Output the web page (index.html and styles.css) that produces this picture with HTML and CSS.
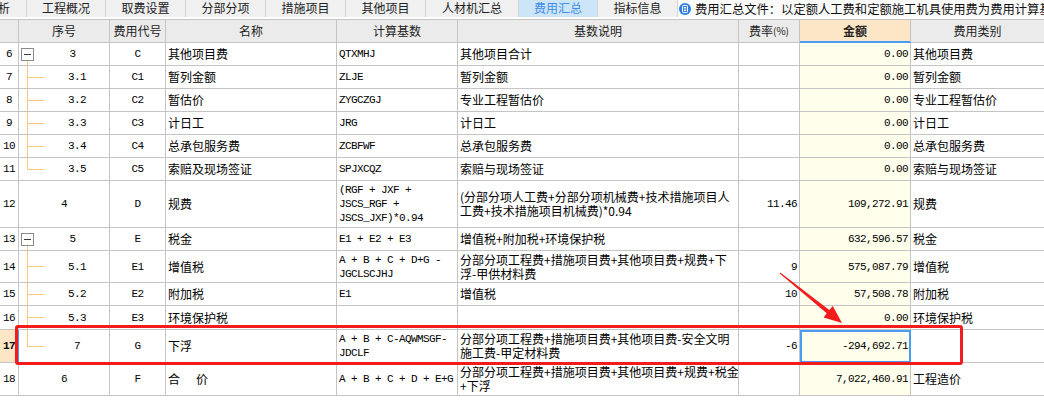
FILE: index.html
```html
<!DOCTYPE html>
<html lang="zh-CN">
<head>
<meta charset="utf-8">
<title>费用汇总</title>
<link rel="stylesheet" href="styles.css">
</head>
<body>
<div class="page">
  <div class="tabs">
    <div class="tab first">造价分析</div>
    <div class="tab w79">工程概况</div>
    <div class="tab">取费设置</div>
    <div class="tab">分部分项</div>
    <div class="tab">措施项目</div>
    <div class="tab">其他项目</div>
    <div class="tab w93">人材机汇总</div>
    <div class="tab active">费用汇总</div>
    <div class="tab">指标信息</div>
    <div class="info">
      <svg class="info-icon" width="12" height="12" viewBox="0 0 12 12">
        <circle cx="6" cy="6" r="6" fill="#2f7fe3"/>
        <rect x="3.5" y="2.5" width="5" height="7" rx="0.8" fill="none" stroke="#fff" stroke-width="1"/>
        <line x1="4.8" y1="4.5" x2="7.2" y2="4.5" stroke="#fff" stroke-width="0.9"/>
        <line x1="4.8" y1="6" x2="7.2" y2="6" stroke="#fff" stroke-width="0.9"/>
        <line x1="4.8" y1="7.5" x2="7.2" y2="7.5" stroke="#fff" stroke-width="0.9"/>
      </svg>
      <span>费用汇总文件：以定额人工费和定额施工机具使用费为费用计算基数</span>
    </div>
  </div>

  <div class="grid">
    <div class="row head">
      <div class="c c0"></div>
      <div class="c c1">序号</div>
      <div class="c c2">费用代号</div>
      <div class="c c3">名称</div>
      <div class="c c4">计算基数</div>
      <div class="c c5">基数说明</div>
      <div class="c c6">费率<span class="pct">(%)</span></div>
      <div class="c c7">金额</div>
      <div class="c c8">费用类别</div>
    </div>

    <div class="row r">
      <div class="c c0">6</div>
      <div class="c c1 t1"><span class="box"></span><span class="txt">3</span></div>
      <div class="c c2">C</div>
      <div class="c c3">其他项目费</div>
      <div class="c c4">QTXMHJ</div>
      <div class="c c5">其他项目合计</div>
      <div class="c c6"></div>
      <div class="c c7">0.00</div>
      <div class="c c8">其他项目费</div>
    </div>
    <div class="row r">
      <div class="c c0">7</div>
      <div class="c c1 t2">3.1</div>
      <div class="c c2">C1</div>
      <div class="c c3">暂列金额</div>
      <div class="c c4">ZLJE</div>
      <div class="c c5">暂列金额</div>
      <div class="c c6"></div>
      <div class="c c7">0.00</div>
      <div class="c c8">暂列金额</div>
    </div>
    <div class="row r">
      <div class="c c0">8</div>
      <div class="c c1 t2">3.2</div>
      <div class="c c2">C2</div>
      <div class="c c3">暂估价</div>
      <div class="c c4">ZYGCZGJ</div>
      <div class="c c5">专业工程暂估价</div>
      <div class="c c6"></div>
      <div class="c c7">0.00</div>
      <div class="c c8">专业工程暂估价</div>
    </div>
    <div class="row r">
      <div class="c c0">9</div>
      <div class="c c1 t2">3.3</div>
      <div class="c c2">C3</div>
      <div class="c c3">计日工</div>
      <div class="c c4">JRG</div>
      <div class="c c5">计日工</div>
      <div class="c c6"></div>
      <div class="c c7">0.00</div>
      <div class="c c8">计日工</div>
    </div>
    <div class="row r">
      <div class="c c0">10</div>
      <div class="c c1 t2">3.4</div>
      <div class="c c2">C4</div>
      <div class="c c3">总承包服务费</div>
      <div class="c c4">ZCBFWF</div>
      <div class="c c5">总承包服务费</div>
      <div class="c c6"></div>
      <div class="c c7">0.00</div>
      <div class="c c8">总承包服务费</div>
    </div>
    <div class="row r">
      <div class="c c0">11</div>
      <div class="c c1 t2 last">3.5</div>
      <div class="c c2">C5</div>
      <div class="c c3">索赔及现场签证</div>
      <div class="c c4">SPJXCQZ</div>
      <div class="c c5">索赔与现场签证</div>
      <div class="c c6"></div>
      <div class="c c7">0.00</div>
      <div class="c c8">索赔与现场签证</div>
    </div>
    <div class="row r h47">
      <div class="c c0">12</div>
      <div class="c c1">4</div>
      <div class="c c2">D</div>
      <div class="c c3">规费</div>
      <div class="c c4"><span>(RGF + JXF +<br>JSCS_RGF +<br>JSCS_JXF)*0.94</span></div>
      <div class="c c5"><span>(分部分项人工费+分部分项机械费+技术措施项目人<br>工费+技术措施项目机械费)*0.94</span></div>
      <div class="c c6">11.46</div>
      <div class="c c7">109,272.91</div>
      <div class="c c8">规费</div>
    </div>
    <div class="row r">
      <div class="c c0">13</div>
      <div class="c c1 t1"><span class="box"></span><span class="txt">5</span></div>
      <div class="c c2">E</div>
      <div class="c c3">税金</div>
      <div class="c c4">E1 + E2 + E3</div>
      <div class="c c5">增值税+附加税+环境保护税</div>
      <div class="c c6"></div>
      <div class="c c7">632,596.57</div>
      <div class="c c8">税金</div>
    </div>
    <div class="row r h32">
      <div class="c c0">14</div>
      <div class="c c1 t2">5.1</div>
      <div class="c c2">E1</div>
      <div class="c c3">增值税</div>
      <div class="c c4"><span>A + B + C + D+G -<br>JGCLSCJHJ</span></div>
      <div class="c c5"><span>分部分项工程费+措施项目费+其他项目费+规费+下<br>浮-甲供材料费</span></div>
      <div class="c c6">9</div>
      <div class="c c7">575,087.79</div>
      <div class="c c8">增值税</div>
    </div>
    <div class="row r">
      <div class="c c0">15</div>
      <div class="c c1 t2">5.2</div>
      <div class="c c2">E2</div>
      <div class="c c3">附加税</div>
      <div class="c c4">E1</div>
      <div class="c c5">增值税</div>
      <div class="c c6">10</div>
      <div class="c c7">57,508.78</div>
      <div class="c c8">附加税</div>
    </div>
    <div class="row r h24">
      <div class="c c0">16</div>
      <div class="c c1 t2">5.3</div>
      <div class="c c2">E3</div>
      <div class="c c3">环境保护税</div>
      <div class="c c4"></div>
      <div class="c c5"></div>
      <div class="c c6"></div>
      <div class="c c7">0.00</div>
      <div class="c c8">环境保护税</div>
    </div>
    <div class="row r h33 sel">
      <div class="c c0">17</div>
      <div class="c c1 t2 last">7</div>
      <div class="c c2">G</div>
      <div class="c c3">下浮</div>
      <div class="c c4"><span>A + B + C-AQWMSGF-<br>JDCLF</span></div>
      <div class="c c5"><span>分部分项工程费+措施项目费+其他项目费-安全文明<br>施工费-甲定材料费</span></div>
      <div class="c c6">-6</div>
      <div class="c c7">-294,692.71</div>
      <div class="c c8"></div>
    </div>
    <div class="row r h33">
      <div class="c c0">18</div>
      <div class="c c1">6</div>
      <div class="c c2">F</div>
      <div class="c c3"><span class="spaced">合</span>价</div>
      <div class="c c4">A + B + C + D + E+G</div>
      <div class="c c5"><span>分部分项工程费+措施项目费+其他项目费+规费+税金<br>+下浮</span></div>
      <div class="c c6"></div>
      <div class="c c7">7,022,460.91</div>
      <div class="c c8">工程造价</div>
    </div>
  </div>

  <div class="redbox"></div>
  <svg class="arrow" width="80" height="64" viewBox="0 0 80 64">
    <polygon fill="#f41c1c" points="9.7,8.4 56.7,48.3 53.6,52.6 72,58 62.8,40.9 59.3,45.1 10.3,7.6"/>
  </svg>
</div>
</body>
</html>
```

FILE: styles.css
```css
* {
  box-sizing: border-box;
  margin: 0;
  padding: 0;
}

body {
  margin: 0;
  width: 1044px;
  height: 418px;
  overflow: hidden;
  background: #ffffff;
  font-family: "Noto Sans CJK SC", "Noto Sans", sans-serif;
  font-size: 12px;
  color: #000;
}

.page {
  position: relative;
  width: 1044px;
  height: 418px;
  overflow: hidden;
}

/* ---------- tab bar ---------- */
.tabs {
  display: flex;
  height: 17px;
  margin-bottom: 2px;
  background: #f0f0f0;
  white-space: nowrap;
}

.tab {
  flex: none;
  width: 80px;
  height: 17px;
  border-right: 1px solid #d4d4d4;
  text-align: center;
  line-height: 16px;
  font-size: 12px;
  color: #222;
}

.tab.first {
  width: 81px;
  margin-left: -54px;
}

.tab.w79 { width: 79px; }
.tab.w93 { width: 93px; }

.tab.active {
  width: 79px;
  background: #cde5f9;
  color: #3d8de6;
}

.info {
  flex: 1;
  display: flex;
  align-items: center;
  gap: 4px;
  padding-left: 1px;
  background: #fbfbfb;
  font-size: 12.3px;
  color: #111;
  overflow: hidden;
}

.info-icon {
  flex: none;
}

/* ---------- grid ---------- */
.grid {
  border-top: 1px solid #c4c4c4;
}

.row {
  display: flex;
  height: 23px;
}

.row.h24 { height: 24px; }
.row.h32 { height: 32px; }
.row.h33 { height: 33px; }
.row.h47 { height: 47px; }

.c {
  flex: none;
  display: flex;
  align-items: center;
  padding: 0 2px;
  border-right: 1px solid #c4c4c4;
  border-bottom: 1px solid #c4c4c4;
  overflow: hidden;
  white-space: nowrap;
  line-height: 14px;
}

.c0 { width: 19px; padding: 0; justify-content: center; }
.c1 { width: 91px; justify-content: center; }
.c2 { width: 56px; justify-content: center; }
.c3 { width: 171px; }
.c4 { width: 121px; }
.c5 { width: 281px; }
.c6 { width: 61px; justify-content: flex-end; }
.c7 { width: 111px; justify-content: flex-end; background: #ffffec; }
.c8 { flex: 1; border-right: 0; }

/* header */
.head .c {
  justify-content: center;
  background: #ebebeb;
  color: #222;
  font-size: 12px;
}

.head .c7 {
  background: #fde6c6;
  font-weight: bold;
  border-bottom: 2px solid #4a9cf5;
}

.pct {
  font-size: 10px;
}

/* monospaced columns */
.r .c0,
.r .c1,
.r .c2,
.r .c4,
.r .c6,
.r .c7 {
  font-family: "Liberation Mono", "DejaVu Sans Mono", monospace;
  font-size: 11px;
  letter-spacing: -0.6px;
}

/* tree column */
.t1 {
  justify-content: flex-start;
  padding-left: 2px;
  background: linear-gradient(#fbc77c, #fbc77c) 8px 100% / 1px 5px no-repeat;
}

.t1 .box {
  flex: none;
  width: 13px;
  height: 13px;
  border: 1px solid #8a8a8a;
  background: linear-gradient(#3a3a3a, #3a3a3a) center / 7px 1px no-repeat, #ffffff;
}

.t1 .txt {
  flex: 1;
  text-align: center;
  padding-left: 4px;
}

.t2 {
  padding-left: 26px;
  padding-right: 0;
  background:
    linear-gradient(#fbc77c, #fbc77c) 8px 0 / 1px 100% no-repeat,
    linear-gradient(#fbc77c, #fbc77c) 8px 50% / 17px 1px no-repeat;
}

.t2.last {
  background:
    linear-gradient(#fbc77c, #fbc77c) 8px 0 / 1px 50% no-repeat,
    linear-gradient(#fbc77c, #fbc77c) 8px 50% / 17px 1px no-repeat;
}

.spaced {
  margin-right: 16px;
}

/* selected row */
.sel .c0 {
  background: #fde6c6;
  font-weight: bold;
  border-right-color: #4a9cf5;
}

.sel .c7 {
  outline: 2px solid #4a9cf5;
  outline-offset: -2px;
}

/* annotations */
.redbox {
  position: absolute;
  left: 15px;
  top: 325px;
  width: 948px;
  height: 40px;
  border: 3px solid #f21c1c;
  border-radius: 3px;
}

.arrow {
  position: absolute;
  left: 770px;
  top: 265px;
}
```
